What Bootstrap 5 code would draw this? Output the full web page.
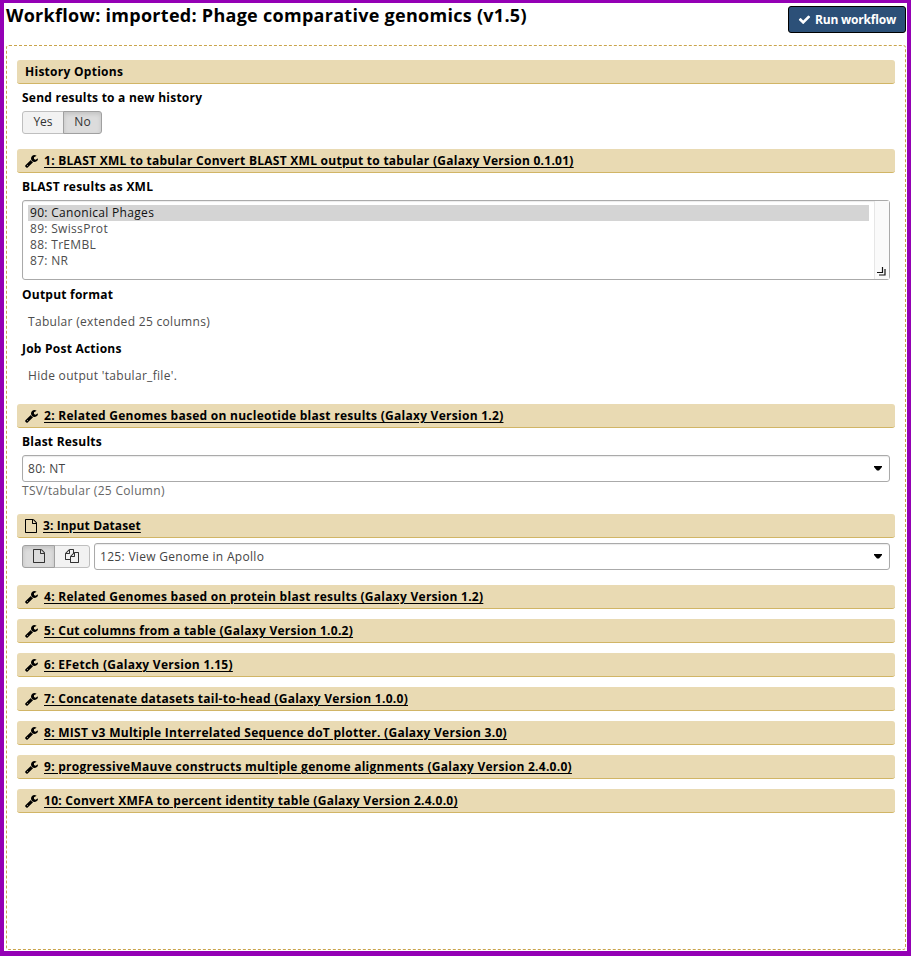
<!DOCTYPE html>
<html lang="en">
<head>
<meta charset="utf-8">
<title>Workflow: imported: Phage comparative genomics (v1.5)</title>
<link rel="stylesheet" href="https://cdn.jsdelivr.net/npm/bootstrap@5.3.0/dist/css/bootstrap.min.css">
<style>
body{font-family:"Open Sans","Noto Sans",sans-serif;font-size:12px;color:#4d4d4d;line-height:16px;letter-spacing:.31px;background:#fff}
.frame{height:956px;border:solid #9400b5;border-width:3px 4px 5px;padding:0 1px 1px 2px;overflow:hidden}
.topbar{height:42px}
.page-title{font-size:18px;font-weight:700;line-height:24px;color:#000;margin:0;letter-spacing:.28px}
.btn.run-btn{height:27px;width:118px;margin-top:3px;font-size:12px;font-weight:700;line-height:16px;letter-spacing:-.2px;padding:0;color:#fff;background:#2c5078;border:1px solid #000;border-radius:3px}
.form-area{height:905px;border:1px dashed #c9a44c;border-radius:3px;padding:14px 10px}
.step-bar{height:24px;background:#e9dab3;border-bottom:1px solid #d1b566;border-radius:3px;padding:0 8px 0 7px;color:#000;font-weight:700;line-height:23px;letter-spacing:.27px;margin-bottom:10px}
.step-bar a{color:#000;text-decoration:underline;text-underline-offset:2px}
.step-bar .ico{margin-right:5px}
.plain-bar{padding-left:8px}
.data-bar{letter-spacing:.12px}
.open-bar{margin-bottom:0}
.step-body{padding:0 5px;margin-bottom:15px}
.pick-row{padding-top:5px}
.field-label,.field-value{line-height:27px;height:27px}
.field-label{color:#000;font-weight:700;letter-spacing:.23px}
.field-value{padding-left:6px}
.ico{display:block;fill:currentColor;flex:none}
.toggle .btn{height:23px;padding:0 0 2px;font-size:12px;line-height:19px;letter-spacing:0;color:#333;background:#f2f2f2;border:1px solid #bfbfbf;border-radius:3px}
.toggle .btn.active{background:#dcdcdc;border-color:#a0a0a0;box-shadow:inset 0 2px 4px rgba(0,0,0,.12);color:#333}
.toggle .btn:first-child{border-top-right-radius:0;border-bottom-right-radius:0}
.toggle .btn:last-child{border-top-left-radius:0;border-bottom-left-radius:0}
.w-yes{width:42px}.w-no{width:39px}.w-one{width:33px}.w-many{width:36px}
.box{border:1px solid #aaa;border-radius:3px;background:#fff;box-shadow:inset 0 1px 1px rgba(0,0,0,.08)}
.pick{height:27px;padding:0 7px 0 5px;color:#444}
.multi{height:80px;margin-bottom:1px}
.opts{padding:4px 5px}
.opts div{height:16px;padding-left:2px;line-height:16px}
.opts .chosen{background:#d4d4d4;color:#111}
.track{width:15px;background:#fafafa;border-left:1px solid #e6e6e6;padding:0 3px 3px 0}
.help{height:17px;line-height:18px;color:#666}
</style>
<script src="https://cdn.jsdelivr.net/npm/bootstrap@5.3.0/dist/js/bootstrap.bundle.min.js"></script>
</head>
<body>
<svg class="d-none">
<symbol id="check" viewBox="0 0 1792 1792"><path d="M1671 566q0 40-28 68l-724 724-136 136q-28 28-68 28t-68-28l-136-136-362-362q-28-28-28-68t28-68l136-136q28-28 68-28t68 28l294 295 656-657q28-28 68-28t68 28l136 136q28 28 28 68z"/></symbol>
<symbol id="wrench" viewBox="0 0 1792 1792"><path d="M448 1472q0-26-19-45t-45-19-45 19-19 45 19 45 45 19 45-19 19-45zm644-420l-682 682q-37 37-90 37-52 0-91-37l-106-108q-38-36-38-90 0-53 38-91l681-681q39 98 114.500 173.500t173.500 114.500zm634-435q0 39-23 106-47 134-164.500 217.500t-258.500 83.500q-185 0-316.500-131.500t-131.500-316.500 131.500-316.500 316.500-131.500q58 0 121.500 16.500t107.500 46.500q16 11 16 28t-16 28l-293 169v224l193 107q5-3 79-48.500t135.500-81 70.500-35.500q15 0 23.500 10t8.500 25z"/></symbol>
<symbol id="file" viewBox="0 0 1792 1792"><path d="M1596 380q28 28 48 76t20 88v1152q0 40-28 68t-68 28h-1344q-40 0-68-28t-28-68v-1600q0-40 28-68t68-28h896q40 0 88 20t76 48zm-444-244v376h376q-10-29-22-41l-313-313q-12-12-41-22zm384 1528v-1024h-416q-40 0-68-28t-28-68v-416h-768v1536h1280z"/></symbol>
<symbol id="files" viewBox="0 0 1792 1792"><path d="M1696 384q40 0 68 28t28 68v1216q0 40-28 68t-68 28h-960q-40 0-68-28t-28-68v-288h-544q-40 0-68-28t-28-68v-672q0-40 20-88t48-76l408-408q28-28 76-48t88-20h416q40 0 68 28t28 68v328q68-40 128-40h416zm-544 213l-299 299h299v-299zm-640-384l-299 299h299v-299zm196 647l316-316v-416h-384v416q0 40-28 68t-68 28h-416v640h512v-256q0-40 20-88t48-76zm956 804v-1152h-384v416q0 40-28 68t-68 28h-416v640h896z"/></symbol>
<symbol id="caret" viewBox="0 0 8 5"><path d="M0 0h8v1L5 4.500H3L0 1z"/></symbol>
</svg>
<div class="frame">
  <header class="topbar d-flex justify-content-between align-items-start">
    <h1 class="page-title">Workflow: imported: Phage comparative genomics (v1.5)</h1>
    <button class="btn run-btn d-flex align-items-center justify-content-center gap-1"><svg class="ico" width="13" height="13"><use href="#check"/></svg><span>Run workflow</span></button>
  </header>
  <main class="form-area">
    <div class="step-bar open-bar plain-bar">History Options</div>
    <div class="step-body">
      <div class="field-label">Send results to a new history</div>
      <div class="btn-group toggle d-flex"><button class="btn w-yes flex-grow-0">Yes</button><button class="btn w-no active flex-grow-0">No</button></div>
    </div>

    <div class="step-bar open-bar d-flex align-items-center"><svg class="ico" width="15" height="14"><use href="#wrench"/></svg><a href="#">1: BLAST XML to tabular Convert BLAST XML output to tabular (Galaxy Version 0.1.01)</a></div>
    <div class="step-body">
      <div class="field-label">BLAST results as XML</div>
      <div class="box multi d-flex">
        <div class="opts flex-grow-1"><div class="chosen">90: Canonical Phages</div><div>89: SwissProt</div><div>88: TrEMBL</div><div>87: NR</div></div>
        <div class="track d-flex align-items-end justify-content-end"><svg width="9" height="9" viewBox="0 0 9 9" fill="none" stroke="#111" stroke-width="1.200"><path d="M0 5.500h5.500V0M2 8h6V2"/></svg></div>
      </div>
      <div class="field-label">Output format</div>
      <div class="field-value">Tabular (extended 25 columns)</div>
      <div class="field-label">Job Post Actions</div>
      <div class="field-value">Hide output 'tabular_file'.</div>
    </div>

    <div class="step-bar open-bar d-flex align-items-center"><svg class="ico" width="15" height="14"><use href="#wrench"/></svg><a href="#">2: Related Genomes based on nucleotide blast results (Galaxy Version 1.2)</a></div>
    <div class="step-body">
      <div class="field-label">Blast Results</div>
      <div class="box pick d-flex align-items-center justify-content-between"><span>80: NT</span><svg class="ico text-black" width="8" height="5"><use href="#caret"/></svg></div>
      <div class="help">TSV/tabular (25 Column)</div>
    </div>

    <div class="step-bar open-bar data-bar d-flex align-items-center"><svg class="ico" width="14" height="14"><use href="#file"/></svg><a href="#">3: Input Dataset</a></div>
    <div class="step-body d-flex align-items-center gap-1 pick-row">
      <div class="btn-group toggle"><button class="btn w-one active d-flex align-items-center justify-content-center flex-grow-0"><svg class="ico" width="14" height="14"><use href="#file"/></svg></button><button class="btn w-many d-flex align-items-center justify-content-center flex-grow-0"><svg class="ico" width="14" height="14"><use href="#files"/></svg></button></div>
      <div class="box pick d-flex align-items-center justify-content-between flex-grow-1"><span>125: View Genome in Apollo</span><svg class="ico text-black" width="8" height="5"><use href="#caret"/></svg></div>
    </div>

    <div class="step-bar d-flex align-items-center"><svg class="ico" width="15" height="14"><use href="#wrench"/></svg><a href="#">4: Related Genomes based on protein blast results (Galaxy Version 1.2)</a></div>
    <div class="step-bar d-flex align-items-center"><svg class="ico" width="15" height="14"><use href="#wrench"/></svg><a href="#">5: Cut columns from a table (Galaxy Version 1.0.2)</a></div>
    <div class="step-bar d-flex align-items-center"><svg class="ico" width="15" height="14"><use href="#wrench"/></svg><a href="#">6: EFetch (Galaxy Version 1.15)</a></div>
    <div class="step-bar d-flex align-items-center"><svg class="ico" width="15" height="14"><use href="#wrench"/></svg><a href="#">7: Concatenate datasets tail-to-head (Galaxy Version 1.0.0)</a></div>
    <div class="step-bar d-flex align-items-center"><svg class="ico" width="15" height="14"><use href="#wrench"/></svg><a href="#">8: MIST v3 Multiple Interrelated Sequence doT plotter. (Galaxy Version 3.0)</a></div>
    <div class="step-bar d-flex align-items-center"><svg class="ico" width="15" height="14"><use href="#wrench"/></svg><a href="#">9: progressiveMauve constructs multiple genome alignments (Galaxy Version 2.4.0.0)</a></div>
    <div class="step-bar d-flex align-items-center"><svg class="ico" width="15" height="14"><use href="#wrench"/></svg><a href="#">10: Convert XMFA to percent identity table (Galaxy Version 2.4.0.0)</a></div>
  </main>
</div>
</body>
</html>
